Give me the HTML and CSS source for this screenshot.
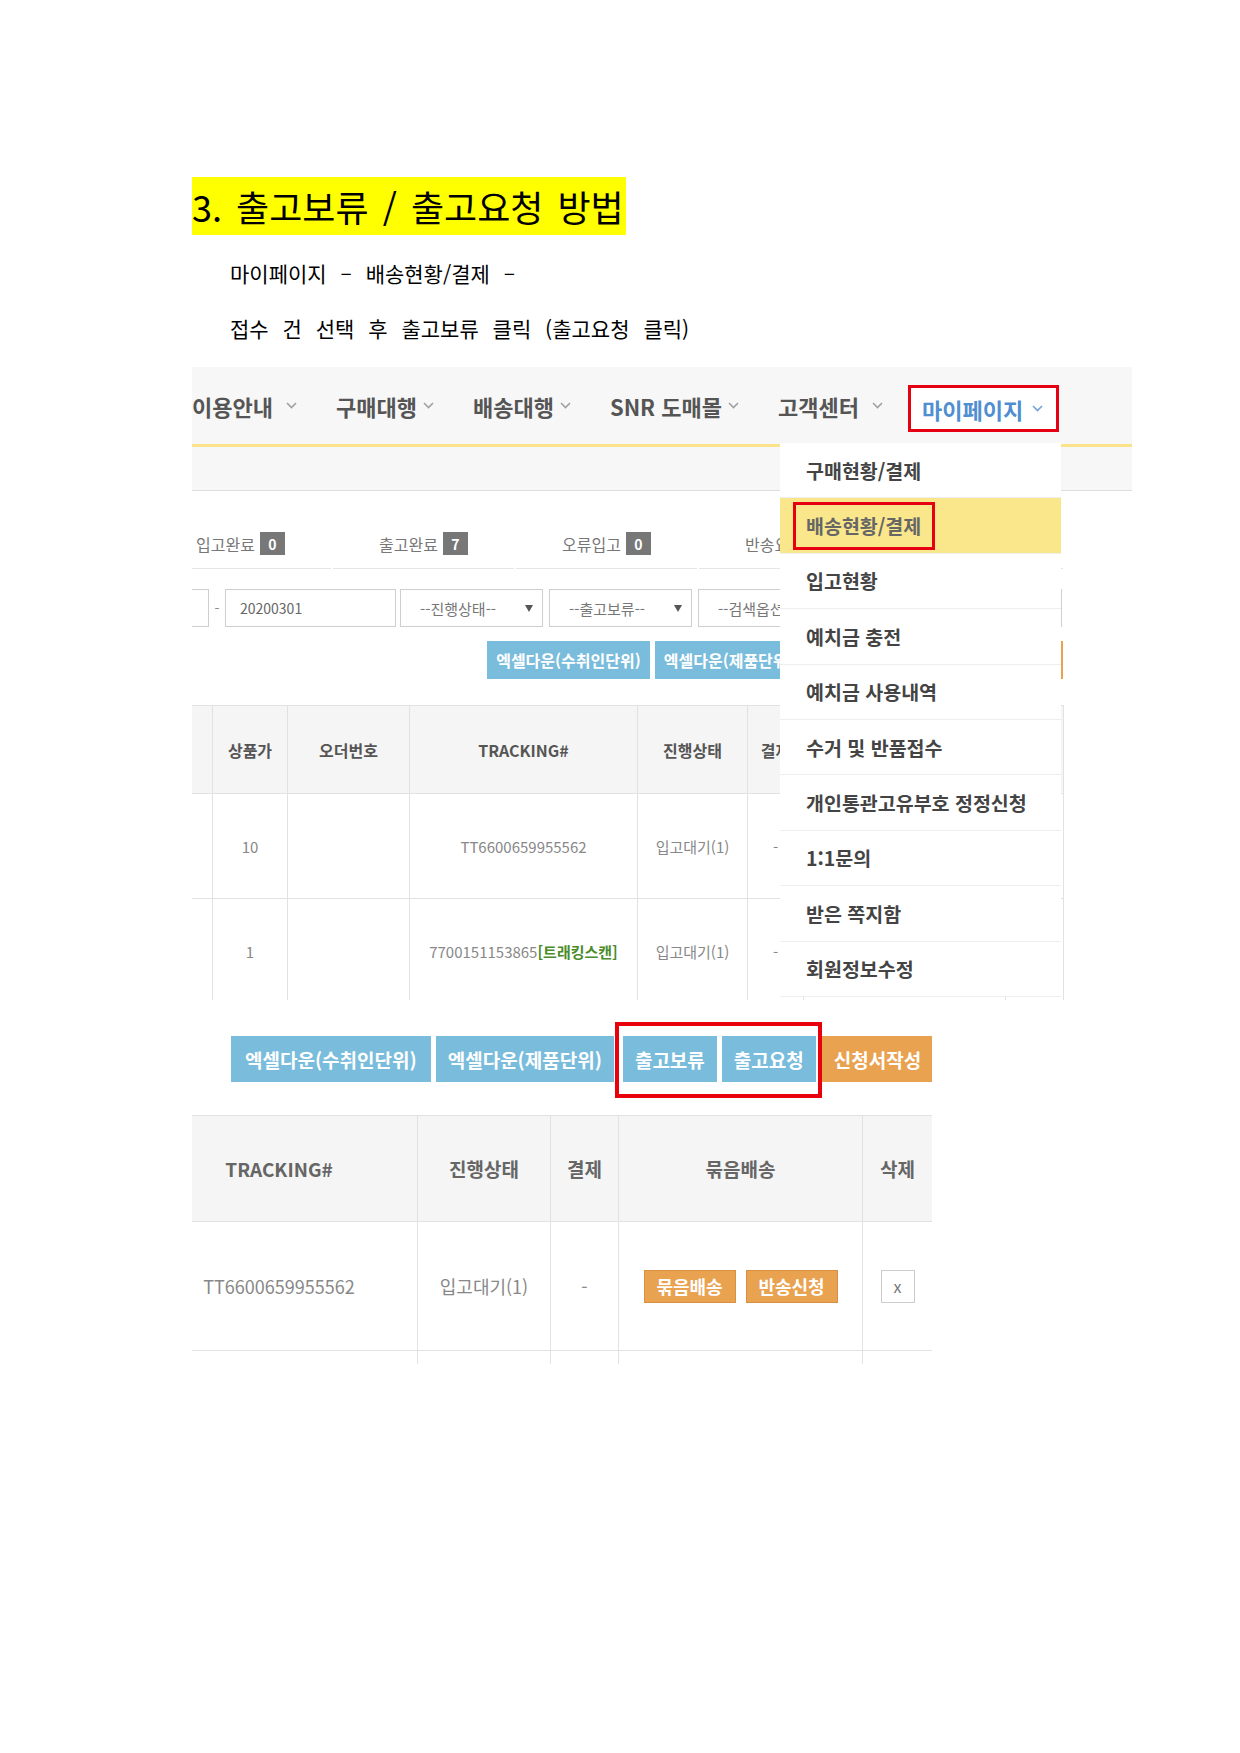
FILE: index.html
```html
<!DOCTYPE html>
<html lang="ko">
<head>
<meta charset="utf-8">
<title>출고보류 / 출고요청 방법</title>
<link rel="stylesheet" href="styles.css">
</head>
<body>
<div class="doc">
  <h1 class="title">3. 출고보류 / 출고요청 방법</h1>
  <div class="steps">
    <p>마이페이지 – 배송현황/결제 –</p>
    <p>접수 건 선택 후 출고보류 클릭 (출고요청 클릭)</p>
  </div>

  <div class="shot shot-menu">
    <nav class="nav">
      <div class="nav-item">이용안내<svg class="chev wide" viewBox="0 0 11 7"><polyline points="1,1 5.5,5.5 10,1"/></svg></div>
      <div class="nav-item">구매대행<svg class="chev" viewBox="0 0 11 7"><polyline points="1,1 5.5,5.5 10,1"/></svg></div>
      <div class="nav-item">배송대행<svg class="chev" viewBox="0 0 11 7"><polyline points="1,1 5.5,5.5 10,1"/></svg></div>
      <div class="nav-item">SNR 도매몰<svg class="chev" viewBox="0 0 11 7"><polyline points="1,1 5.5,5.5 10,1"/></svg></div>
      <div class="nav-item">고객센터<svg class="chev wide" viewBox="0 0 11 7"><polyline points="1,1 5.5,5.5 10,1"/></svg></div>
      <div class="nav-item active">마이페이지<svg class="chev" viewBox="0 0 11 7"><polyline points="1,1 5.5,5.5 10,1"/></svg></div>
    </nav>
    <div class="nav-line"></div>
    <div class="subbar"></div>

    <div class="page">
      <div class="status">
        <div class="stat">입고완료<span class="badge">0</span></div>
        <div class="stat">출고완료<span class="badge">7</span></div>
        <div class="stat">오류입고<span class="badge">0</span></div>
        <div class="stat">반송요청<span class="badge">0</span></div>
        <div class="stat">반송완료<span class="badge">0</span></div>
      </div>

      <div class="filters">
        <div class="field f-start"></div>
        <span class="dash">-</span>
        <div class="field f-date">20200301</div>
        <div class="select">--진행상태--<span class="arrow"></span></div>
        <div class="select s-wide">--출고보류--<span class="arrow"></span></div>
        <div class="select s-wide">--검색옵션--<span class="arrow"></span></div>
        <div class="field f-search"></div>
      </div>

      <div class="actions actions-sm">
        <span class="btn">엑셀다운(수취인단위)</span>
        <span class="btn">엑셀다운(제품단위)</span>
        <span class="btn">출고보류</span>
        <span class="btn">출고요청</span>
        <span class="btn btn-orange">신청서작성</span>
      </div>

      <table class="grid grid-1">
        <colgroup>
          <col style="width:62px"><col style="width:75px"><col style="width:122px"><col style="width:228px">
          <col style="width:110px"><col style="width:56px"><col style="width:202px"><col style="width:58px">
        </colgroup>
        <thead>
          <tr><th></th><th>상품가</th><th>오더번호</th><th>TRACKING#</th><th>진행상태</th><th>결제</th><th>묶음배송</th><th>삭제</th></tr>
        </thead>
        <tbody>
          <tr><td></td><td>10</td><td></td><td>TT6600659955562</td><td>입고대기(1)</td><td>-</td><td></td><td></td></tr>
          <tr><td></td><td>1</td><td></td><td>7700151153865<span class="scan">[트래킹스캔]</span></td><td>입고대기(1)</td><td>-</td><td></td><td></td></tr>
        </tbody>
      </table>
    </div>

    <ul class="dropdown">
      <li>구매현황/결제</li>
      <li class="current"><span class="hl">배송현황/결제</span></li>
      <li>입고현황</li>
      <li>예치금 충전</li>
      <li>예치금 사용내역</li>
      <li>수거 및 반품접수</li>
      <li>개인통관고유부호 정정신청</li>
      <li>1:1문의</li>
      <li>받은 쪽지함</li>
      <li>회원정보수정</li>
    </ul>
  </div>

  <div class="shot shot-list">
    <div class="actions actions-lg">
      <span class="btn">엑셀다운(수취인단위)</span>
      <span class="btn">엑셀다운(제품단위)</span>
      <div class="mark">
        <span class="btn">출고보류</span>
        <span class="btn">출고요청</span>
      </div>
      <span class="btn btn-orange">신청서작성</span>
    </div>

    <div class="table-crop">
      <table class="grid grid-2">
        <colgroup>
          <col style="width:277px"><col style="width:133px"><col style="width:68px"><col style="width:244px"><col style="width:70px">
        </colgroup>
        <thead>
          <tr><th>TRACKING#</th><th>진행상태</th><th>결제</th><th>묶음배송</th><th>삭제</th></tr>
        </thead>
        <tbody>
          <tr>
            <td>TT6600659955562</td>
            <td>입고대기(1)</td>
            <td>-</td>
            <td><span class="tag">묶음배송</span><span class="tag">반송신청</span></td>
            <td><span class="del">x</span></td>
          </tr>
          <tr class="next"><td></td><td></td><td></td><td></td><td></td></tr>
        </tbody>
      </table>
    </div>
  </div>
</div>
</body>
</html>
```

FILE: styles.css
```css
* { box-sizing: border-box; margin: 0; padding: 0; }
html, body { background: #fff; }
body {
  font-family: "Noto Sans CJK KR", "Noto Sans", sans-serif;
  color: #000;
}

.doc { padding: 177px 0 0 192px; }

/* document heading */
.title {
  width: 434px;
  height: 58px;
  background: #ffff00;
  font-size: 36px;
  font-weight: 400;
  line-height: 58px;
  white-space: nowrap;
  word-spacing: 4px;
}
.steps { padding-left: 38px; margin-top: 11px; }
.steps p {
  font-size: 21px;
  line-height: 55px;
  word-spacing: 8px;
  white-space: nowrap;
}

/* screenshots */
.shot { position: relative; overflow: hidden; }
.shot-menu { width: 940px; height: 633px; margin-top: 11px; }

.nav {
  display: flex;
  align-items: center;
  gap: 39px;
  height: 77px;
  background: #f7f7f7;
}
.nav-item {
  display: flex;
  align-items: center;
  font-size: 22px;
  font-weight: 700;
  color: #555;
  white-space: nowrap;
  line-height: 1;
}
.chev {
  width: 11px;
  height: 7px;
  margin-left: 6px;
  fill: none;
  stroke: #a0a0a0;
  stroke-width: 1.6;
}
.chev.wide { margin-left: 13px; }
.nav-item.active {
  height: 47px;
  margin: 6px 0 0 -14px;
  padding: 0 13px 0 11px;
  border: 3px solid #e50012;
  background: #fff;
  color: #4f8fd1;
}
.nav-item.active .chev { stroke: #6fa3da; margin-left: 9px; }
.nav-line { height: 3px; background: #fbe38b; }
.subbar { height: 44px; background: #f7f7f7; border-bottom: 1px solid #dedede; }

.page { width: 913px; margin-left: -42px; }

.status {
  display: grid;
  grid-template-columns: repeat(5, 1fr);
  column-gap: 2px;
  padding-top: 28px;
}
.stat {
  display: flex;
  align-items: center;
  justify-content: center;
  height: 50px;
  border-bottom: 1px solid #e6e6e6;
  font-size: 16px;
  color: #777;
}
.badge {
  display: inline-flex;
  align-items: center;
  justify-content: center;
  width: 25px;
  height: 23px;
  margin-left: 5px;
  background: #777;
  color: #fff;
  font-size: 14px;
  font-weight: 700;
}

.filters {
  display: flex;
  align-items: center;
  height: 38px;
  margin-top: 20px;
}
.field, .select {
  display: flex;
  align-items: center;
  height: 38px;
  border: 1px solid #cfcfcf;
  background: #fff;
  font-size: 14px;
  color: #666;
}
.f-start { width: 59px; }
.dash { width: 16px; text-align: center; font-size: 14px; color: #888; }
.f-date { width: 171px; padding-left: 14px; }
.select {
  width: 143px;
  margin-left: 4px;
  padding: 0 9px 0 19px;
  justify-content: space-between;
  font-size: 15px;
  color: #777;
}
.select.s-wide { margin-left: 6px; }
.arrow {
  width: 0;
  height: 0;
  border-left: 4px solid transparent;
  border-right: 4px solid transparent;
  border-top: 7px solid #555;
}
.f-search { width: 215px; margin-left: 6px; }

.actions { display: flex; gap: 5px; }
.btn {
  display: flex;
  align-items: center;
  justify-content: center;
  background: #79bcdc;
  color: #fff;
  font-weight: 700;
  white-space: nowrap;
}
.btn-orange { background: #e9a24f; }
.actions-sm { justify-content: flex-end; margin-top: 14px; }
.actions-sm .btn { height: 38px; padding: 0 9px; font-size: 16px; }

/* tables */
.grid { border-collapse: collapse; table-layout: fixed; }
.grid th, .grid td {
  border: 1px solid #e2e2e2;
  padding: 0;
  text-align: center;
  vertical-align: middle;
  white-space: nowrap;
  overflow: hidden;
}
.grid th { background: #f5f5f5; font-weight: 700; color: #555; }
.grid-1 { width: 913px; margin-top: 26px; font-size: 15px; }
.grid-1 th { height: 88px; font-size: 16px; }
.grid-1 td { height: 105px; color: #888; }
.scan { color: #4b8b2b; font-weight: 700; }

/* dropdown menu */
.dropdown {
  position: absolute;
  top: 76px;
  left: 588px;
  width: 281px;
  list-style: none;
  background: #fff;
}
.dropdown li {
  display: flex;
  align-items: center;
  height: 55.4px;
  padding-left: 26px;
  border-bottom: 1px solid #eee;
  font-size: 19.5px;
  font-weight: 700;
  color: #444;
  white-space: nowrap;
}
.dropdown li.current { background: #fae68b; color: #666; }
.hl {
  display: flex;
  align-items: center;
  height: 48px;
  margin-left: -13px;
  padding: 0 11px 0 10px;
  border: 3px solid #e50012;
}

/* second screenshot */
.shot-list { width: 740px; height: 342px; margin-top: 22px; padding-top: 14px; }
.actions-lg { padding-left: 39px; }
.actions-lg .btn { height: 46px; padding: 0 12px; font-size: 19px; }
.actions-lg > .btn:first-child { padding: 0 14px; }
.mark {
  position: relative;
  display: flex;
  gap: 5px;
  margin-left: 4px;
  margin-right: 1px;
}
.mark::after {
  content: "";
  position: absolute;
  top: -14px;
  bottom: -16px;
  left: -8px;
  right: -6px;
  border: 4px solid #e8000d;
}
.table-crop { overflow: hidden; margin-top: 33px; }
.grid-2 { width: 792px; margin-left: -52px; font-size: 18px; }
.grid-2 th { height: 106px; font-size: 19px; color: #666; }
.grid-2 td { height: 129px; color: #888; }
.grid-2 tr.next td { height: 40px; }
.tag {
  display: inline-flex;
  align-items: center;
  justify-content: center;
  width: 92px;
  height: 33px;
  background: #e9a24f;
  border: 1px solid #d8913f;
  color: #fff;
  font-size: 18px;
  font-weight: 700;
}
.tag + .tag { margin-left: 10px; }
.del {
  display: inline-flex;
  align-items: center;
  justify-content: center;
  width: 34px;
  height: 33px;
  border: 1px solid #ccc;
  font-size: 16px;
  color: #777;
}
```
